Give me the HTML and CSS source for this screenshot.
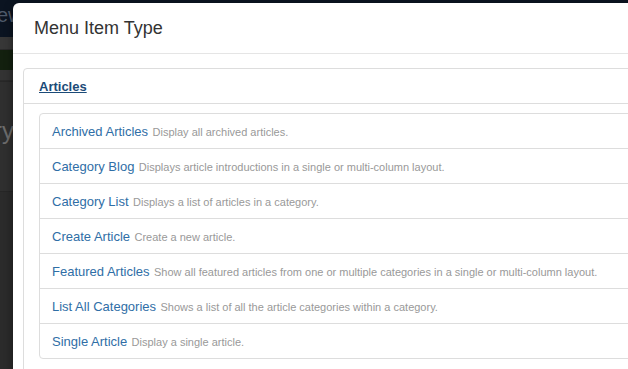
FILE: index.html
```html
<!DOCTYPE html>
<html>
<head>
<meta charset="utf-8">
<link rel="stylesheet" href="styles.css">
</head>
<body>
<div class="page">
  <div class="topbar"><span class="brand">ew</span></div>
  <div class="strip strip-grey"></div>
  <div class="strip strip-green"></div>
  <div class="strip strip-sub"></div>
  <div class="title-area"><span class="page-title">ry</span></div>
  <div class="rest"></div>
</div>

<div class="modal">
  <div class="modal-header">
    <h3 class="modal-title">Menu Item Type</h3>
  </div>
  <div class="modal-body">
    <div class="panel">
      <div class="panel-heading"><a class="panel-link" href="#">Articles</a></div>
      <div class="panel-body">
        <ul class="list-group">
          <li class="list-item"><a href="#" class="item-title">Archived Articles</a> <small class="item-desc">Display all archived articles.</small></li>
          <li class="list-item"><a href="#" class="item-title">Category Blog</a> <small class="item-desc">Displays article introductions in a single or multi-column layout.</small></li>
          <li class="list-item"><a href="#" class="item-title">Category List</a> <small class="item-desc">Displays a list of articles in a category.</small></li>
          <li class="list-item"><a href="#" class="item-title">Create Article</a> <small class="item-desc">Create a new article.</small></li>
          <li class="list-item"><a href="#" class="item-title">Featured Articles</a> <small class="item-desc">Show all featured articles from one or multiple categories in a single or multi-column layout.</small></li>
          <li class="list-item"><a href="#" class="item-title">List All Categories</a> <small class="item-desc">Shows a list of all the article categories within a category.</small></li>
          <li class="list-item"><a href="#" class="item-title">Single Article</a> <small class="item-desc">Display a single article.</small></li>
        </ul>
      </div>
    </div>
  </div>
</div>
</body>
</html>
```

FILE: styles.css
```css
html, body {
  margin: 0;
  padding: 0;
  width: 628px;
  height: 369px;
  overflow: hidden;
  background: #2b2b2b;
  font-family: "Liberation Sans", Arial, sans-serif;
}

.page {
  width: 100%;
  height: 100%;
}

.topbar {
  height: 37px;
  background: #0b1421;
  overflow: hidden;
  white-space: nowrap;
}

.brand {
  display: block;
  margin-left: -3px;
  padding-top: 4px;
  font-size: 20px;
  line-height: 22px;
  color: #4f5a6a;
}

.strip {
  border-bottom: 1px solid #2a2a2a;
}

.strip-grey {
  height: 12px;
  background: #373737;
}

.strip-green {
  height: 20px;
  background: #13200f;
  border-bottom: none;
}

.strip-sub {
  height: 10px;
  background: #333333;
}

.title-area {
  height: 109px;
  background: #2f2f2f;
  border-top: 1px solid #272727;
  border-bottom: 1px solid #262626;
  overflow: hidden;
  white-space: nowrap;
}

.page-title {
  display: block;
  margin-left: -6px;
  padding-top: 35px;
  font-size: 24px;
  line-height: 28px;
  color: #6c6c6c;
}

.rest {
  height: 180px;
  background: #2b2b2b;
}

.modal {
  position: absolute;
  left: 13px;
  top: 3px;
  width: 700px;
  height: 420px;
  background: #ffffff;
  border-radius: 6px;
  box-shadow: 0 3px 9px rgba(0, 0, 0, 0.5);
}

.modal-header {
  padding: 15px 20px 15px 21px;
  border-bottom: 1px solid #e5e5e5;
}

.modal-title {
  margin: 0;
  font-size: 18px;
  line-height: 20px;
  font-weight: normal;
  color: #333333;
}

.modal-body {
  padding: 14px 0 0 10px;
}

.panel {
  border: 1px solid #dddddd;
  border-radius: 4px;
  background: #ffffff;
}

.panel-heading {
  height: 34px;
  line-height: 34px;
  padding: 0 15px;
  border-bottom: 1px solid #dddddd;
}

.panel-link {
  font-size: 13px;
  font-weight: bold;
  color: #1c4b78;
  text-decoration: underline;
}

.panel-body {
  padding: 9px 0 20px 15px;
}

.list-group {
  list-style: none;
  margin: 0;
  padding: 0;
  border: 1px solid #dddddd;
  border-radius: 4px;
}

.list-item {
  height: 34px;
  line-height: 33px;
  padding: 0 12px;
  border-top: 1px solid #dddddd;
  white-space: nowrap;
}

.list-item:first-child {
  border-top: none;
}

.item-title {
  font-size: 13px;
  color: #2f6ea6;
  text-decoration: none;
}

.item-desc {
  font-size: 11px;
  color: #999999;
}
```
